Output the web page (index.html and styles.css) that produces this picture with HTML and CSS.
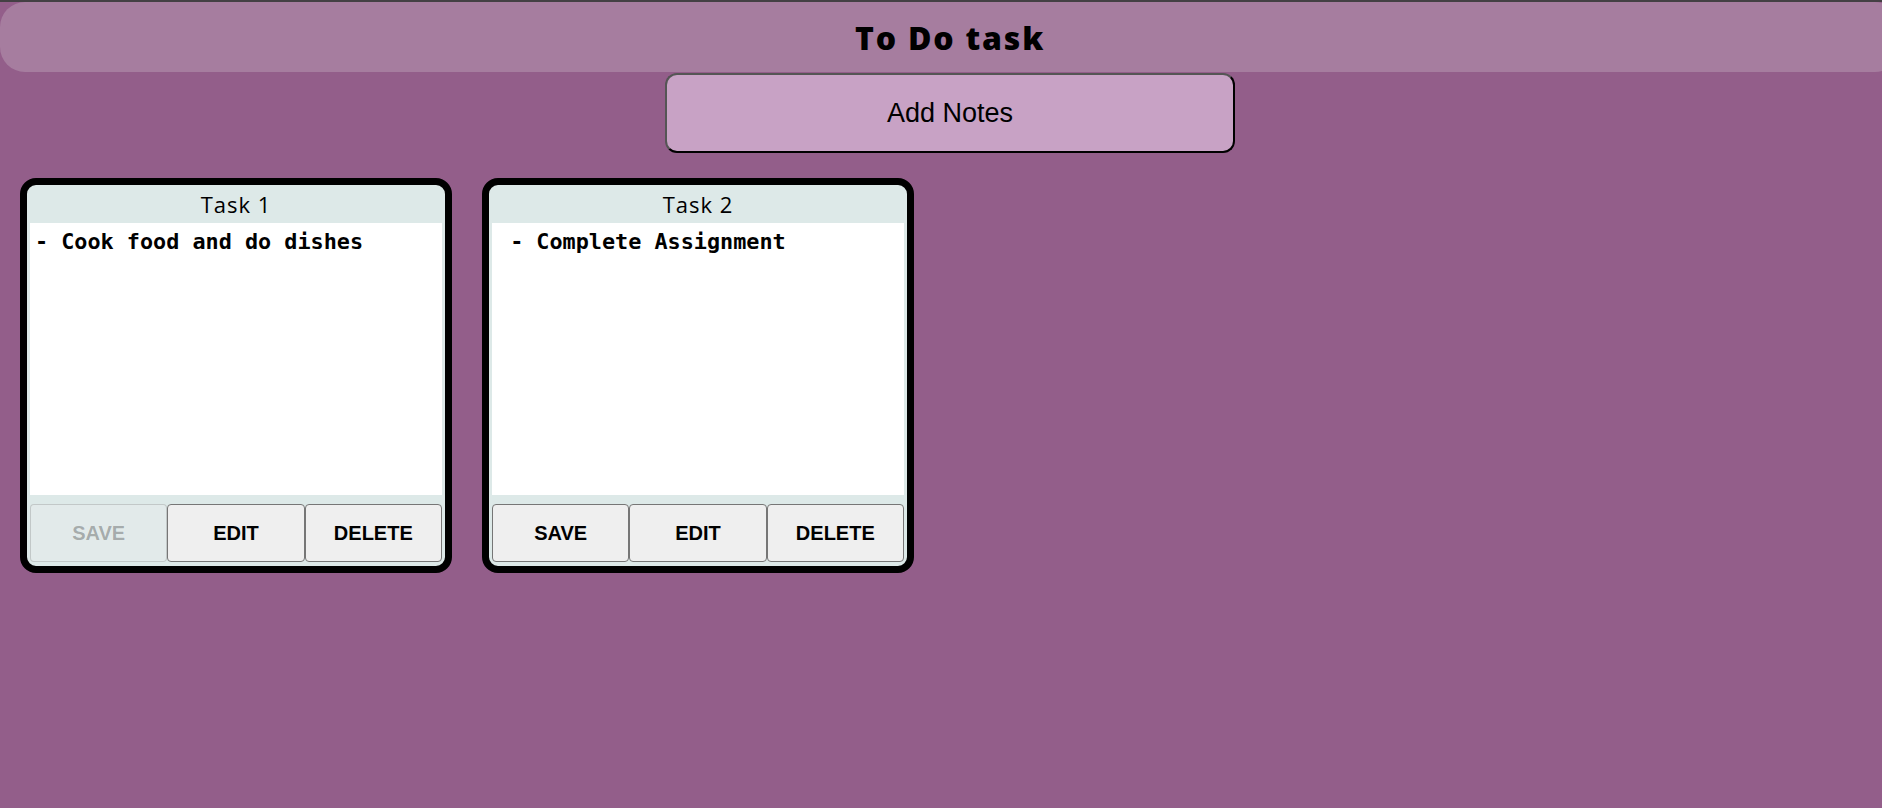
FILE: index.html
```html
<!DOCTYPE html>
<html lang="en">
<head>
<meta charset="utf-8">
<title>To Do task</title>
<link rel="stylesheet" href="styles.css">
</head>
<body>
<div class="page">
  <header class="header"><h1 class="title">To Do task</h1></header>
  <button class="add-btn">Add Notes</button>
  <main class="cards">
    <section class="card">
      <div class="card-title">Task 1</div>
      <textarea class="note" readonly>- Cook food and do dishes</textarea>
      <div class="actions">
        <button class="act" disabled>SAVE</button>
        <button class="act">EDIT</button>
        <button class="act">DELETE</button>
      </div>
    </section>
    <section class="card">
      <div class="card-title">Task 2</div>
      <textarea class="note" readonly> - Complete Assignment</textarea>
      <div class="actions">
        <button class="act">SAVE</button>
        <button class="act">EDIT</button>
        <button class="act">DELETE</button>
      </div>
    </section>
  </main>
</div>
</body>
</html>
```

FILE: styles.css
```css
html, body {
  margin: 0;
  padding: 0;
}
body {
  background: #935e8a;
  border-top: 2px solid #444044;
  overflow: hidden;
  height: 806px;
}
.page {
  width: 1900px;
}
.header {
  height: 70px;
  background: #a67d9f;
  border-radius: 25px;
  display: flex;
  align-items: center;
  justify-content: center;
}
.title {
  margin: 0;
  font-family: "Open Sans", "Liberation Sans", sans-serif;
  font-weight: 800;
  font-size: 32px;
  letter-spacing: 1.8px;
  color: #000;
}
.add-btn {
  display: block;
  margin: 1px auto 0;
  width: 570px;
  height: 80px;
  background: #c8a2c5;
  border: 2px solid;
  border-color: #555 #000 #000 #555;
  border-radius: 12px;
  font-family: "Liberation Sans", Arial, sans-serif;
  font-size: 27px;
  color: #000;
  padding: 0;
}
.cards {
  display: flex;
  gap: 30px;
  padding: 25px 0 0 20px;
}
.card {
  box-sizing: border-box;
  width: 432px;
  height: 395px;
  border: 7px solid #000;
  border-radius: 16px;
  background: #dde9e8;
  padding: 0 3px 4px;
  display: flex;
  flex-direction: column;
}
.card-title {
  margin: 0 -3px;
  height: 38px;
  display: flex;
  align-items: center;
  justify-content: center;
  font-family: "Open Sans", "Liberation Sans", sans-serif;
  font-size: 22px;
  letter-spacing: 1px;
  color: #000;
}
.note {
  box-sizing: border-box;
  height: 272px;
  width: 100%;
  margin: 0;
  border: none;
  outline: none;
  resize: none;
  overflow: hidden;
  background: #fff;
  padding: 6px 5px;
  font-family: "DejaVu Sans Mono", "Liberation Mono", monospace;
  font-weight: 700;
  font-size: 21.8px;
  color: #000;
}
.actions {
  margin-top: 9px;
  display: grid;
  grid-template-columns: repeat(3, 1fr);
  height: 58px;
}
.act {
  margin: 0;
  padding: 0;
  background: #efefef;
  border: 1px solid #767676;
  border-radius: 4px;
  font-family: "Liberation Sans", Arial, sans-serif;
  font-weight: 700;
  font-size: 20px;
  color: #000;
}
.act:disabled {
  background: rgba(239, 239, 239, 0.3);
  border-color: rgba(118, 118, 118, 0.3);
  color: rgba(16, 16, 16, 0.3);
}
```
